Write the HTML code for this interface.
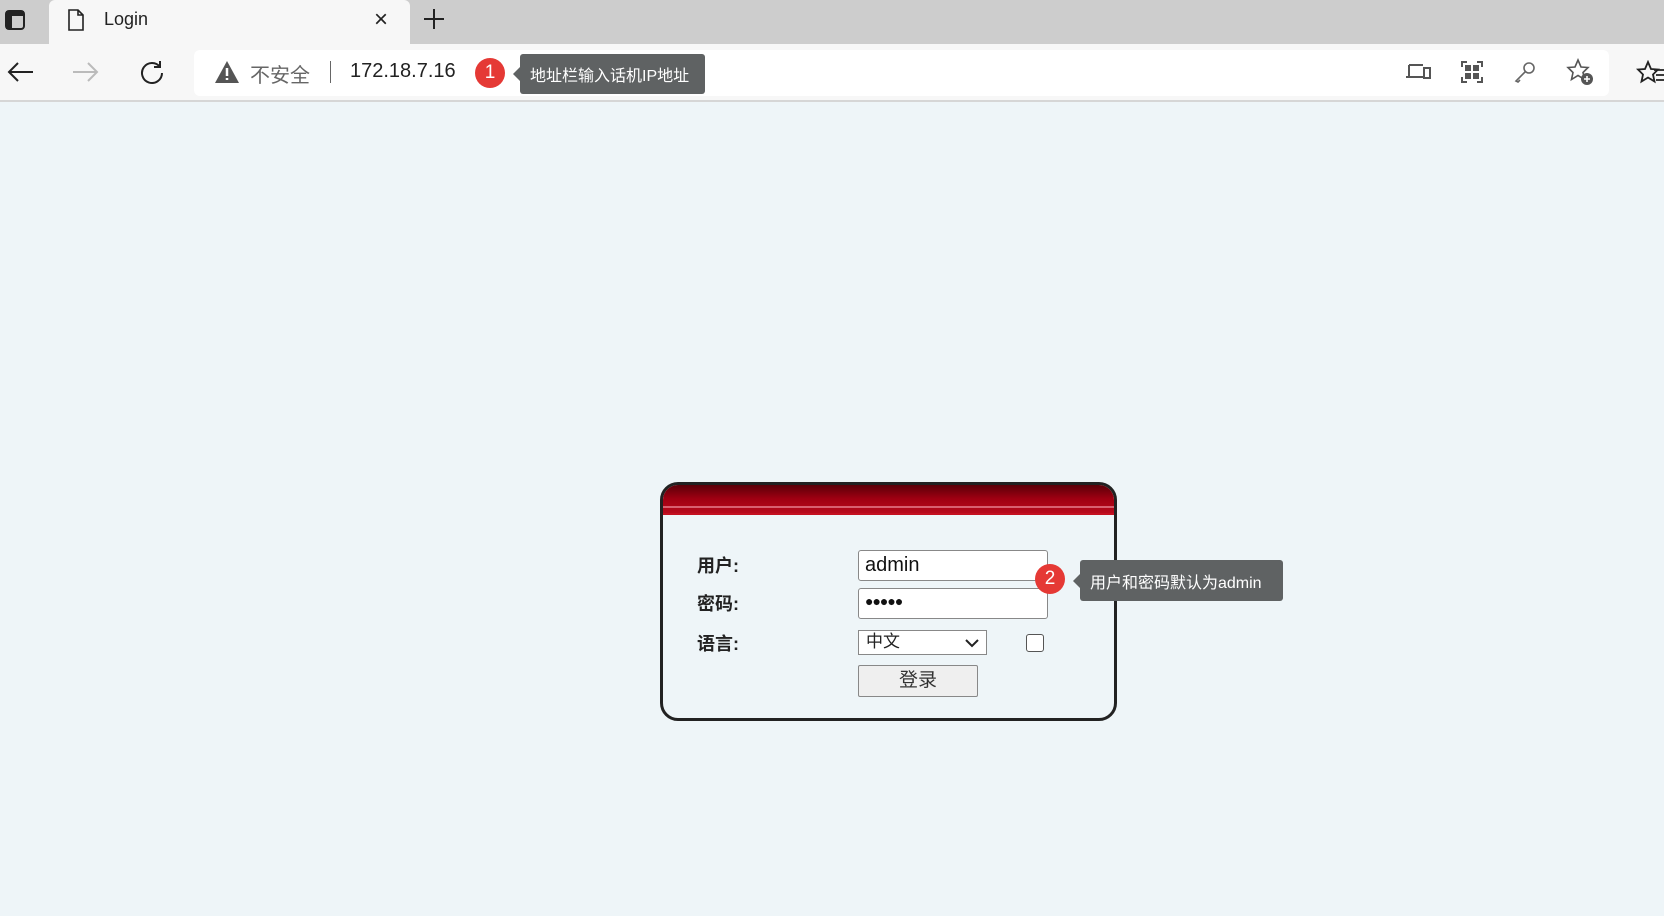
<!DOCTYPE html>
<html><head><meta charset="utf-8"><style>
*{margin:0;padding:0;box-sizing:border-box}
body{width:1664px;height:916px;overflow:hidden;background:#eef5f8;font-family:"Liberation Sans","Noto Sans CJK SC",sans-serif;position:relative}
.abs{position:absolute}
#tabbar{left:0;top:0;width:1664px;height:44px;background:#cdcdcd}
#tab{left:49px;top:0;width:361px;height:46px;background:#f7f7f7;border-radius:6px 6px 0 0}
#toolbar{left:0;top:44px;width:1664px;height:58px;background:#f7f7f7;border-bottom:2px solid #d6d6d6}
#addr{left:194px;top:50px;width:1415px;height:46px;background:#fff;border-radius:6px}
.tip{background:#5f6263;color:#fff;font-size:16px;border-radius:3px;display:flex;align-items:center;padding-left:10px}
.tip:before{content:"";position:absolute;left:-7px;top:50%;margin-top:-7px;border:7px solid transparent;border-left:0;border-right-color:#5f6263}
.badge{width:30px;height:30px;border-radius:50%;background:#e53935;color:#fff;font-size:19px;text-align:center;line-height:30px}
#box{left:660px;top:482px;width:457px;height:239px;border:3px solid #222;border-radius:18px;overflow:hidden;background:#eef5f8}
#hdr{left:0;top:0;width:100%;height:30px;background:linear-gradient(#5a0008,#a00012 50%,#b80a1c);border-bottom:2px solid #c41020}
#hdr:after{content:"";position:absolute;left:0;right:0;top:21px;height:2px;background:#d86070}
.lbl{font-weight:bold;font-size:18px;color:#222}
.inp{background:#fff;border:1px solid #888;border-radius:3px}
</style></head><body>
<div id="tabbar" class="abs"></div>
<div id="tab" class="abs"></div>
<svg class="abs" style="left:4px;top:9px" width="22" height="22" viewBox="0 0 22 22"><rect x="2" y="2" width="18" height="18" rx="3" fill="none" stroke="#222" stroke-width="2"/><rect x="2" y="2" width="18" height="5" fill="#222"/><rect x="2" y="2" width="6" height="18" fill="#222"/></svg>
<svg class="abs" style="left:66px;top:8px" width="20" height="24" viewBox="0 0 20 24"><path d="M3 2h9l5 5v15H3z M12 2v5h5" fill="none" stroke="#222" stroke-width="1.6"/></svg>
<div class="abs" style="left:104px;top:9px;font-size:18px;color:#222">Login</div>
<div class="abs" style="left:374px;top:6px;font-size:24px;color:#222">×</div>
<svg class="abs" style="left:423px;top:8px" width="22" height="22"><path d="M11 1v20M1 11h20" stroke="#222" stroke-width="2"/></svg>
<div id="toolbar" class="abs"></div>
<svg class="abs" style="left:6px;top:61px" width="28" height="22"><path d="M27 11H3M12 2l-9 9 9 9" fill="none" stroke="#222" stroke-width="2"/></svg>
<svg class="abs" style="left:72px;top:61px" width="28" height="22"><path d="M1 11h24M16 2l9 9-9 9" fill="none" stroke="#bbb" stroke-width="2"/></svg>
<svg class="abs" style="left:139px;top:59px" width="26" height="26"><path d="M21 8A10 10 0 1 0 23 14M21 2v6h-6" fill="none" stroke="#222" stroke-width="2"/></svg>
<div id="addr" class="abs"></div>
<svg class="abs" style="left:214px;top:60px" width="26" height="24"><path d="M13 1L25 23H1z" fill="#555"/><path d="M13 8v8M13 18v2" stroke="#fff" stroke-width="2.5"/></svg>
<div class="abs" style="left:250px;top:59px;font-size:20px;color:#666">不安全</div>
<div class="abs" style="left:330px;top:61px;width:1px;height:22px;background:#666"></div>
<div class="abs" style="left:350px;top:60px;font-size:20px;color:#222">172.18.7.16</div>
<div class="abs badge" style="left:475px;top:58px">1</div>
<div class="abs tip" style="left:520px;top:54px;width:185px;height:40px">地址栏输入话机IP地址</div>
<svg class="abs" style="left:1405px;top:62px" width="26" height="20"><path d="M4 3h14M4 3v12M1 15h17" fill="none" stroke="#555" stroke-width="2"/><rect x="19" y="6" width="6" height="10" fill="none" stroke="#555" stroke-width="2"/></svg>
<svg class="abs" style="left:1461px;top:61px" width="22" height="22"><path d="M1 6V1h5M16 1h5v5M21 16v5h-5M6 21H1v-5" fill="none" stroke="#555" stroke-width="2"/><rect x="4" y="4" width="6" height="6" fill="#555"/><rect x="12" y="4" width="6" height="6" fill="#555"/><rect x="4" y="12" width="6" height="6" fill="#555"/><rect x="12" y="12" width="6" height="6" fill="#555"/></svg>
<svg class="abs" style="left:1514px;top:61px" width="22" height="22"><circle cx="15" cy="7" r="5" fill="none" stroke="#666" stroke-width="1.6"/><path d="M11 11L2 20l2 1 2-2" fill="none" stroke="#666" stroke-width="1.6"/></svg>
<svg class="abs" style="left:1566px;top:58px" width="28" height="28"><path d="M12 2l3 7 7 .5-5 5 1.5 7-6.5-4-6.5 4 1.5-7-5-5 7-.5z" fill="none" stroke="#555" stroke-width="1.6"/><circle cx="21" cy="21" r="6" fill="#555"/><path d="M21 18v6M18 21h6" stroke="#fff" stroke-width="1.6"/></svg>
<svg class="abs" style="left:1636px;top:60px" width="28" height="24"><path d="M12 2l3 7 7 .5-5 5 1.5 7-6.5-4-6.5 4 1.5-7-5-5 7-.5z" fill="none" stroke="#222" stroke-width="1.8"/><path d="M18 10h10M20 15h8M20 20h8" stroke="#222" stroke-width="1.8"/></svg>
<div id="box" class="abs"><div id="hdr" class="abs"></div></div>
<div class="abs lbl" style="left:697px;top:552px">用户:</div>
<div class="abs lbl" style="left:697px;top:590px">密码:</div>
<div class="abs lbl" style="left:697px;top:630px">语言:</div>
<div class="abs inp" style="left:858px;top:550px;width:190px;height:31px;font-size:20px;padding:3px 6px;color:#111">admin</div>
<div class="abs inp" style="left:858px;top:588px;width:190px;height:31px;font-size:14px;padding:4px 6px;color:#111;letter-spacing:-1px">●●●●●</div>
<div class="abs" style="left:858px;top:630px;width:129px;height:25px;background:#fff;border:1px solid #888;font-size:17px;line-height:22px;padding:0 7px;color:#222">中文</div>
<svg class="abs" style="left:965px;top:638px" width="14" height="10"><path d="M1 2l6 6 6-6" fill="none" stroke="#222" stroke-width="2"/></svg>
<div class="abs" style="left:1026px;top:634px;width:18px;height:18px;border:1.5px solid #555;border-radius:3px;background:#fff"></div>
<div class="abs" style="left:858px;top:665px;width:120px;height:32px;background:#efefef;border:1px solid #888;border-radius:2px;font-size:19px;text-align:center;line-height:30px;color:#333">登录</div>
<div class="abs badge" style="left:1035px;top:564px">2</div>
<div class="abs tip" style="left:1080px;top:560px;width:203px;height:41px">用户和密码默认为admin</div>
</body></html>
